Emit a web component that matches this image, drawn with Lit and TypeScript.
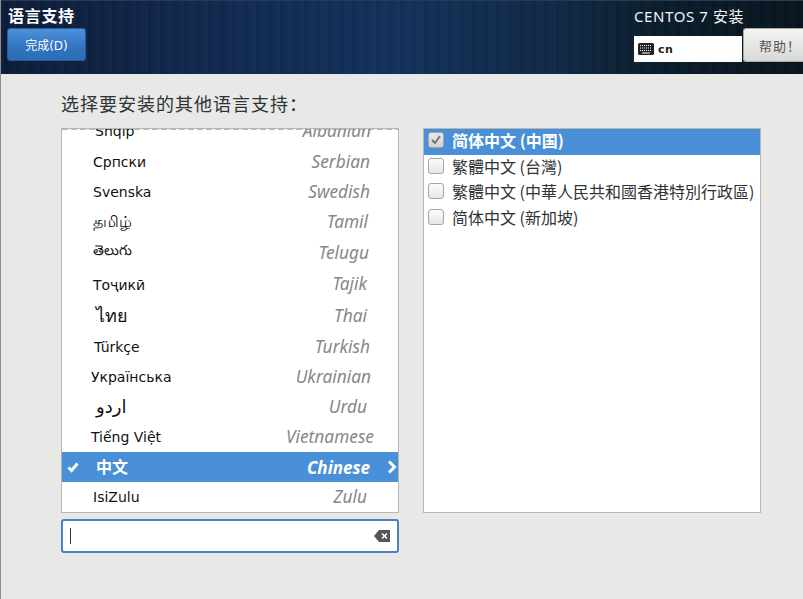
import { LitElement, html, css } from "lit";
import { customElement } from "lit/decorators.js";

interface Lang { n: string; e: string; h: number; x: number; r: number; cls?: string; }
// Row height, native-name start and English-name end vary per row in the list.
const langs: Lang[] = [
  { n: "Српски", e: "Serbian", h: 30, x: 31, r: 28 },
  { n: "Svenska", e: "Swedish", h: 30, x: 31, r: 28 },
  { n: "தமிழ்", e: "Tamil", h: 31, x: 31, r: 30, cls: "t16" },
  { n: "తెలుగు", e: "Telugu", h: 31, x: 31, r: 29, cls: "up" },
  { n: "Тоҷикӣ", e: "Tajik", h: 31, x: 31, r: 31 },
  { n: "ไทย", e: "Thai", h: 32, x: 34, r: 31, cls: "t18" },
  { n: "Türkçe", e: "Turkish", h: 30, x: 32, r: 28 },
  { n: "Українська", e: "Ukrainian", h: 30, x: 29, r: 27 },
  { n: "اردو", e: "Urdu", h: 30, x: 34, r: 31, cls: "t18" },
  { n: "Tiếng Việt", e: "Vietnamese", h: 30, x: 29, r: 24 },
];
const locales = ["繁體中文 (台灣)", "繁體中文 (中華人民共和國香港特別行政區)", "简体中文 (新加坡)"];

@customElement("app-root")
export class AppRoot extends LitElement {
  static styles = css`
    :host { display: block; width: 803px; height: 599px; overflow: hidden; background: #e8e8e7; border-left: 1px solid #8f8f8f; box-sizing: border-box; font-family: "DejaVu Sans", "Noto Sans CJK SC", sans-serif; color: #2e3436; }
    .hdr { height: 74px; box-sizing: border-box; display: flex; justify-content: space-between; background:
      repeating-linear-gradient(90deg, rgba(255,255,255,.018) 0 3px, rgba(0,0,0,.02) 3px 7px, rgba(255,255,255,.01) 7px 12px),
      linear-gradient(90deg, #0c1c38 0%, #112a52 30%, #13305a 50%, #0f2844 70%, #0a1c2a 82%, #07141e 100%); border-top: 1px solid #2a3a52; position: relative; }
    .strip { height: 1px; background: #e2e7ea; }
    .hl { padding: 6px 0 0 7px; display: flex; flex-direction: column; }
    .title { font-size: 16px; font-weight: 700; line-height: 20px; color: #fff; letter-spacing: .7px; white-space: nowrap; }
    .done { margin-top: 1px; margin-left: -1px; width: 79px; height: 33px; box-sizing: border-box; border: 1px solid #2a5c9a; border-radius: 3px; background: linear-gradient(#4d90dc, #3173bf 60%, #2d6db7); color: #fff; font-size: 12px; display: flex; align-items: center; justify-content: center; }
    .hr { display: flex; flex-direction: column; width: 169px; }
    .product { margin-top: 5px; font-family: "Noto Sans", "Noto Sans CJK SC", sans-serif; font-size: 15px; line-height: 20px; color: #f2f4f6; height: 20px; white-space: nowrap; letter-spacing: .6px; }
    .kbd { width: 108px; height: 26px; background: #fff; display: flex; align-items: center; gap: 4px; padding-left: 4px; box-sizing: border-box; font-size: 11px; font-weight: 700; color: #222; margin-top: 10px; letter-spacing: .5px; }
    .help { position: absolute; right: 0; top: 27px; width: 60px; height: 34px; box-sizing: border-box; border: 1px solid #aaa; border-right: 0; border-radius: 3px 0 0 3px; background: linear-gradient(#f4f4f3, #d8d8d6); color: #555; font-family: "Noto Sans CJK SC", sans-serif; font-size: 13px; letter-spacing: 1px; display: flex; align-items: center; padding-left: 15px; white-space: nowrap; }
    .main { padding: 17px 0 0 60px; }
    h2 { margin: 0; font-family: "Noto Sans CJK SC", sans-serif; font-size: 18px; line-height: 22px; font-weight: 400; color: #2e3436; letter-spacing: 1px; white-space: nowrap; }
    .cols { display: flex; gap: 24px; margin-top: 14px; }
    .left { width: 338px; display: flex; flex-direction: column; gap: 6px; }
    .list { height: 385px; box-sizing: border-box; background: #fff; border: 1px solid #b6b6b3; overflow: hidden; position: relative; }
    .clip { height: 18px; overflow: hidden; position: relative; }
    .dash { position: absolute; left: 0; right: 0; top: 0; height: 1px; background: repeating-linear-gradient(90deg, #b9b9b6 0 6px, #fff 6px 9px); }
    .row { height: 30px; display: flex; align-items: center; justify-content: space-between; box-sizing: border-box; }
    .native { font-size: 14px; color: #111; white-space: nowrap; }
    .native.t16 { font-size: 16px; }
    .native.t18 { font-size: 18px; margin-bottom: 2px; }
    .native.up { margin-bottom: 4px; }
    .eng { font-family: "Noto Sans", sans-serif; font-size: 17.3px; font-style: italic; color: #868886; margin-bottom: 2px; }
    .clip .row { margin-top: -13px; padding: 0 27px 0 33px; }
    .plain { padding: 0 31px 0 31px; }
    .row.sel { background: #4a90d9; color: #fff; padding: 0; position: relative; }
    .sel .native { color: #fff; font-weight: 700; font-size: 16px; margin-left: 34px; margin-bottom: 2px; font-family: "Noto Sans CJK SC", sans-serif; }
    .sel .eng { color: #fff; font-weight: 700; font-size: 17px; margin-right: 28px; margin-bottom: 0; }
    .sel svg { position: absolute; }
    .search { height: 34px; box-sizing: border-box; background: #fff; border: 2px solid #4a83bd; border-radius: 3px; display: flex; align-items: center; justify-content: space-between; padding: 0 7px; }
    .caret { width: 1px; height: 16px; background: #333; }
    .right { width: 338px; height: 385px; box-sizing: border-box; background: #fff; border: 1px solid #b6b6b3; }
    .loc { height: 25.5px; box-sizing: border-box; padding-bottom: 3px; display: flex; align-items: center; gap: 8px; padding-left: 4px; font-family: "Noto Sans CJK SC", sans-serif; font-size: 16px; color: #2e3436; white-space: nowrap; }
    .loc.sel { background: #4a90d9; color: #fff; font-weight: 700; }
    .cb { width: 16px; height: 16px; box-sizing: border-box; border: 1px solid #a5a5a3; border-radius: 3px; background: linear-gradient(#fbfbfb, #e6e6e5); display: flex; align-items: center; justify-content: center; flex: none; }
    .sel .cb { background: linear-gradient(#e8e8e8, #d4d4d4); }
  `;

  render() {
    return html`
      <div class="hdr">
        <div class="hl">
          <div class="title">语言支持</div>
          <div class="done">完成(D)</div>
        </div>
        <div class="hr">
          <div class="product">CENTOS 7 安装</div>
          <div class="kbd">
            <svg width="16" height="12" viewBox="0 0 16 12"><rect width="16" height="12" rx="1.5" fill="#222"/><path d="M2 2.5h12M2 5h12M2 7.5h12" stroke="#fff" stroke-width="1" stroke-dasharray="1 1"/><path d="M4 10h8" stroke="#fff"/></svg>
            cn
          </div>
        </div>
        <div class="help">帮助！</div>
      </div>
      <div class="strip"></div>
      <div class="main">
        <h2>选择要安装的其他语言支持：</h2>
        <div class="cols">
          <div class="left">
            <div class="list">
              <div class="dash"></div>
              <div class="clip"><div class="row"><span class="native">Shqip</span><span class="eng">Albanian</span></div></div>
              ${langs.map((l) => html`<div class="row" style="height:${l.h}px;padding:0 ${l.r}px 0 ${l.x}px"><span class="native ${l.cls ?? ""}">${l.n}</span><span class="eng">${l.e}</span></div>`)}
              <div class="row sel">
                <svg style="left:5px" width="12" height="12" viewBox="0 0 12 12"><path d="M1.5 6.5l3 3 6-7" fill="none" stroke="#fff" stroke-width="3"/></svg>
                <span class="native">中文</span><span class="eng">Chinese</span>
                <svg style="right:1px" width="10" height="14" viewBox="0 0 10 14"><path d="M2 1.5l5.5 5.5-5.5 5.5" fill="none" stroke="#fff" stroke-width="3"/></svg>
              </div>
              <div class="row plain"><span class="native">IsiZulu</span><span class="eng">Zulu</span></div>
            </div>
            <div class="search">
              <div class="caret"></div>
              <svg width="16" height="12" viewBox="0 0 16 12"><path d="M5 0h11v12H5L0 6z" fill="#555"/><path d="M8 3.5l5 5M13 3.5l-5 5" stroke="#fff" stroke-width="1.6"/></svg>
            </div>
          </div>
          <div class="right">
            <div class="loc sel"><span class="cb"><svg width="12" height="12" viewBox="0 0 12 12"><path d="M2 6l3 3 5-7" fill="none" stroke="#777" stroke-width="2"/></svg></span>简体中文 (中国)</div>
            ${locales.map((l) => html`<div class="loc"><span class="cb"></span>${l}</div>`)}
          </div>
        </div>
      </div>
    `;
  }
}
